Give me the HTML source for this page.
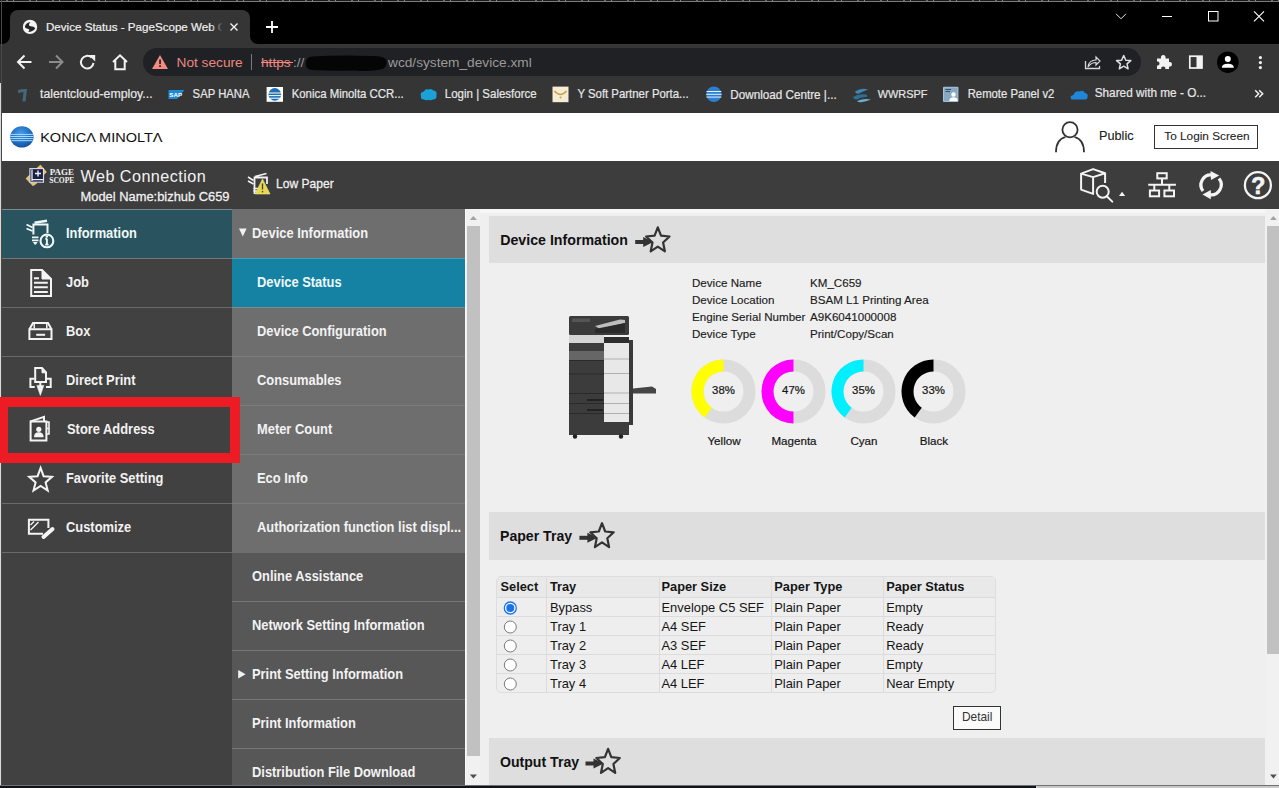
<!DOCTYPE html>
<html><head><meta charset="utf-8">
<style>
*{margin:0;padding:0;box-sizing:border-box}
html,body{width:1279px;height:788px;overflow:hidden;background:#000;font-family:"Liberation Sans",sans-serif;position:relative}
.a{position:absolute}
.t{position:absolute;white-space:nowrap;line-height:1}
svg{position:absolute;left:0;top:0;overflow:visible}
.bm{color:#e6e6e6;-webkit-text-stroke:0.2px #e6e6e6;transform:scaleY(1.08);transform-origin:0 84.65%}
.lt{color:#f2f2f2;font-weight:bold;font-size:12.9px;left:66px;transform:scaleY(1.09);transform-origin:0 84.65%}
.st{color:#f2f2f2;font-weight:bold;font-size:12.9px;left:257px;transform:scaleY(1.09);transform-origin:0 84.65%}
.st2{color:#f2f2f2;font-weight:bold;font-size:12.9px;left:252px;transform:scaleY(1.09);transform-origin:0 84.65%}
.ln{position:absolute;height:1px}
.dt{color:#1c1c1c;font-size:11.6px;-webkit-text-stroke:0.15px #1c1c1c}
.tb{color:#151515;font-size:12.9px}
.th{color:#151515;font-size:12.8px;font-weight:bold;top:581.1px}
.lbl{color:#151515;-webkit-text-stroke:0.2px #151515;font-size:11.6px;top:434.7px;width:70px;text-align:center}
.pct{color:#151515;-webkit-text-stroke:0.2px #151515;font-size:11.4px;top:385px;width:40px;text-align:center}
</style></head><body>

<!-- ================= WINDOW / CHROME ================= -->
<div class="a" style="left:0;top:0;width:1279px;height:1px;background:repeating-linear-gradient(90deg,#1a1a1a 0,#1a1a1a 6px,#6a6a6a 6px,#6a6a6a 8px,#1a1a1a 8px,#1a1a1a 13px,#8a8a8a 13px,#8a8a8a 14px,#1a1a1a 14px,#1a1a1a 23px)"></div>
<div class="a" style="left:0;top:1px;width:1279px;height:1px;background:#7a7a7a"></div>
<!-- tab -->
<div class="a" style="left:10px;top:10px;width:240px;height:34px;background:#353535;border-radius:8px 8px 0 0"></div>
<div class="a" style="left:250px;top:36px;width:8px;height:8px;background:#353535"></div>
<div class="a" style="left:250px;top:28px;width:16px;height:16px;background:#000;border-radius:50%"></div>
<div class="a" style="left:2px;top:36px;width:8px;height:8px;background:#353535"></div>
<div class="a" style="left:-6px;top:28px;width:16px;height:16px;background:#000;border-radius:50%"></div>
<!-- globe favicon -->
<svg width="1279" height="60">
  <circle cx="30" cy="26.9" r="7.2" fill="#f4f4f4"/>
  <path d="M24.9 26.8 Q25.2 23.4 30.4 22.1 Q28.4 24.2 29 25.4 Q30.2 26.2 32.6 26.4 Q34.6 26.9 35.2 28.2 Q34.2 30.8 31.8 31.2 Q30.2 32 28.2 32 Q29.5 30.6 29.3 29.7 Q28.8 28.8 26.8 28.5 Q25.2 28.2 24.9 26.8 Z" fill="#252525"/>
</svg>
<div class="t" style="left:46px;top:20.9px;color:#f0f0f0;font-size:11.6px;-webkit-text-stroke:0.2px #f0f0f0">Device Status - PageScope Web C</div>
<div class="a" style="left:211px;top:14px;width:14px;height:24px;background:linear-gradient(90deg,rgba(53,53,53,0),#353535 85%)"></div>
<div class="a" style="left:225px;top:14px;width:20px;height:24px;background:#353535"></div>
<svg width="1279" height="60">
  <path d="M230.5 23.5 L237.5 30.5 M237.5 23.5 L230.5 30.5" stroke="#f2f2f2" stroke-width="1.4"/>
  <path d="M272 21 V33 M266 27 H278" stroke="#fff" stroke-width="1.8"/>
  <!-- window controls -->
  <path d="M1116 13.8 L1121 18.8 L1126 13.8" stroke="#e8e8e8" stroke-width="1" fill="none"/>
  <path d="M1162 16.5 H1172" stroke="#fff" stroke-width="1"/>
  <rect x="1208.5" y="11.5" width="9.5" height="9.5" stroke="#fff" stroke-width="1" fill="none"/>
  <path d="M1254 11.3 L1264 21.3 M1264 11.3 L1254 21.3" stroke="#fff" stroke-width="1.1"/>
</svg>

<!-- toolbar -->
<div class="a" style="left:0;top:44px;width:1279px;height:69px;background:#353535"></div>
<div class="a" style="left:143px;top:48px;width:998px;height:28px;background:#202124;border-radius:14px"></div>
<svg width="1279" height="120">
  <!-- back -->
  <path d="M31.5 62 H18.5 M24.5 55.5 L18 62 L24.5 68.5" stroke="#f2f2f2" stroke-width="2" fill="none"/>
  <!-- forward -->
  <path d="M49 62 H62 M56 55.5 L62.5 62 L56 68.5" stroke="#8c8c8c" stroke-width="2" fill="none"/>
  <!-- reload -->
  <path d="M93.5 63 A6.3 6.3 0 1 1 91.5 57.5" stroke="#f2f2f2" stroke-width="2" fill="none"/>
  <path d="M88.5 55 H95.2 V61.5 Z" fill="#f2f2f2"/>
  <!-- home -->
  <path d="M113 62 L120 55.3 L127 62 M115.3 60 V69.3 H124.7 V60" stroke="#f2f2f2" stroke-width="2" fill="none" stroke-linejoin="miter"/>
  <!-- warning -->
  <path d="M160 55 L168 69 H152 Z" fill="#f28b82"/>
  <rect x="159.2" y="59.5" width="1.7" height="4.6" fill="#202020"/>
  <rect x="159.2" y="65.3" width="1.7" height="1.7" fill="#202020"/>
  <!-- share -->
  <path d="M1085.5 61 V68.5 H1099.5 V66" stroke="#d8d8d8" stroke-width="1.3" fill="none"/>
  <path d="M1088 67 Q1089 60 1096 60 V57 L1100 61 L1096 65 V62.5 Q1091 62.5 1088 67 Z" stroke="#d8d8d8" stroke-width="1.2" fill="none"/>
  <!-- star -->
  <path d="M1123.7 55.5 L1125.8 60.2 L1130.8 60.6 L1127 63.9 L1128.1 68.8 L1123.7 66.2 L1119.3 68.8 L1120.4 63.9 L1116.6 60.6 L1121.6 60.2 Z" stroke="#e0e0e0" stroke-width="1.5" fill="none" stroke-linejoin="round"/>
  <!-- puzzle -->
  <path d="M1157 58.5 H1161 Q1160.5 55 1163.3 55 Q1166 55 1165.5 58.5 H1169 V62 Q1172 61.5 1172 64.3 Q1172 67 1169 66.6 V69 H1165.3 Q1165.8 66.5 1163.3 66.5 Q1160.8 66.5 1161.2 69 H1157 V65.4 Q1159.5 65.8 1159.5 63.5 Q1159.5 61.2 1157 61.6 Z" fill="#f2f2f2"/>
  <!-- sidebar -->
  <rect x="1189.8" y="56.2" width="12.2" height="11.8" stroke="#f2f2f2" stroke-width="1.7" fill="none"/>
  <rect x="1196.5" y="56" width="5.5" height="12.3" fill="#f2f2f2"/>
  <!-- avatar -->
  <circle cx="1227.8" cy="62.2" r="10.8" fill="#000"/>
  <circle cx="1227.8" cy="59" r="3" fill="#fff"/>
  <path d="M1221.8 67.8 Q1221.8 63.8 1227.8 63.8 Q1233.8 63.8 1233.8 67.8 Z" fill="#fff"/>
  <!-- kebab -->
  <circle cx="1260.4" cy="57.6" r="1.6" fill="#f2f2f2"/>
  <circle cx="1260.4" cy="62.6" r="1.6" fill="#f2f2f2"/>
  <circle cx="1260.4" cy="67.6" r="1.6" fill="#f2f2f2"/>
</svg>
<div class="t" style="left:176.5px;top:56.2px;color:#ec8780;font-size:13.7px">Not secure</div>
<div class="a" style="left:251px;top:54px;width:1px;height:16px;background:#7a7a7a"></div>
<div class="t" style="left:261px;top:56.2px;color:#ec8780;font-size:13.7px">https</div>
<div class="a" style="left:261px;top:62px;width:32px;height:1.3px;background:#ec8780"></div>
<div class="t" style="left:293px;top:56.2px;color:#9a9a9a;font-size:13.7px">://</div>
<div class="t" style="left:388px;top:56.2px;color:#9a9a9a;font-size:13.7px">wcd/system_device.xml</div>
<svg width="1279" height="120"><path d="M312 56.5 Q340 55 370 56 Q384 55.5 386.5 60 Q387.5 66 383 69 Q370 72 355 70.5 Q330 71 312 70 Q305.5 69.5 305.8 63 Q306 57 312 56.5 Z" fill="#050505"/></svg>

<!-- bookmarks -->
<svg width="1279" height="120">
  <!-- talentcloud -->
  <path d="M18 90 Q22 88.5 27 89 L25.5 101.5 H22.5 L23.5 92 Q20 92.5 18 93 Z" fill="#44687a"/>
  <!-- SAP -->
  <path d="M168.5 90 H184.5 L177 99 H168.5 Z" fill="#1c8ad6"/>
  <text x="169.3" y="97" font-family="Liberation Sans" font-weight="bold" font-size="6.2" fill="#fff">SAP</text>
  <!-- KM globe -->
  <rect x="266.6" y="87" width="16.4" height="14.8" fill="#fff"/>
  <circle cx="274.8" cy="94.4" r="6.3" fill="#1e6fb3"/>
  <path d="M268.5 93 H281 M268.7 95.6 H280.9 M269.5 98.2 H280" stroke="#fff" stroke-width="1"/>
  <!-- salesforce -->
  <path d="M421 96.5 Q419.5 92 424 91.5 Q425 88.5 428.5 89.5 Q431 88 433.5 90.5 Q437.5 91 436.5 95 Q437 99.5 433 99.5 Q431 101 428.5 99.8 Q425.5 101 424 99.5 Q420.5 99.5 421 96.5 Z" fill="#1ba0d8"/>
  <!-- ysoft -->
  <rect x="552.5" y="86.6" width="16" height="15.6" fill="#f6ecd6"/>
  <path d="M554.5 91 Q560.5 98 566.5 91" stroke="#c9a041" stroke-width="1.4" fill="none"/>
  <circle cx="560.5" cy="97.5" r="1" fill="#c9a041"/>
  <!-- download globe -->
  <circle cx="713.9" cy="94.3" r="7.7" fill="#2a7fd0"/>
  <path d="M706.5 91.5 H721.3 M706.2 94.3 H721.6 M706.5 97.1 H721.3" stroke="#eaf4ff" stroke-width="1"/>
  <!-- wwrspf -->
  <path d="M855 91.5 Q861 87.5 868 89.5 Q864 91 859 93.5 Q856 94.5 855 91.5 Z" fill="#3f86b4"/>
  <path d="M853 97 Q858 93.5 866 94.5 Q868 95.5 866.5 97 Q861 96.5 857 99.5 Q854 100 853 97 Z" fill="#2e6f96"/>
  <path d="M857 101 Q864 98 871 99.5 Q866 101.5 861 102.3 Q858 102.5 857 101 Z" fill="#6ab0d8"/>
  <!-- remote panel -->
  <rect x="943" y="86.7" width="15.4" height="15.4" rx="1" fill="#a9c3d6"/>
  <rect x="944" y="87.7" width="13.4" height="13.4" fill="#87a9c2"/>
  <path d="M945.5 89.5 H951 M945.5 91.5 H950" stroke="#34506a" stroke-width="1"/>
  <circle cx="953.5" cy="94.5" r="2.2" fill="#fff"/>
  <path d="M949.3 101 Q949.3 97.3 953.5 97.3 Q957.7 97.3 957.7 101 Z" fill="#fff"/>
  <!-- onedrive -->
  <path d="M1071 99 Q1069.5 95.5 1073.5 95 Q1075 90.5 1079.5 91.5 Q1083 89.5 1085 93 Q1088.5 93.5 1087.5 97 Q1087.5 99.5 1085 99.5 H1073 Q1071.5 99.5 1071 99 Z" fill="#1f86d8"/>
  <!-- chevrons -->
  <path d="M1255.2 90.3 L1258.7 93.8 L1255.2 97.3 M1259.2 90.3 L1262.7 93.8 L1259.2 97.3" stroke="#f2f2f2" stroke-width="1.5" fill="none"/>
</svg>
<div class="t bm" style="font-size:12.3px;top:88.0px;left:40px">talentcloud-employ...</div>
<div class="t bm" style="font-size:11.3px;top:88.8px;left:192.6px">SAP HANA</div>
<div class="t bm" style="font-size:11.4px;top:88.7px;left:291.7px">Konica Minolta CCR...</div>
<div class="t bm" style="font-size:11.5px;top:88.7px;left:444.8px">Login | Salesforce</div>
<div class="t bm" style="font-size:11.4px;top:88.7px;left:577.4px">Y Soft Partner Porta...</div>
<div class="t bm" style="font-size:11.7px;top:88.5px;left:730.3px">Download Centre |...</div>
<div class="t bm" style="font-size:10.9px;top:89.2px;left:877.8px">WWRSPF</div>
<div class="t bm" style="font-size:11.3px;top:88.8px;left:967.7px">Remote Panel v2</div>
<div class="t bm" style="font-size:11.8px;top:88.4px;left:1094.7px">Shared with me - O...</div>

<!-- left outer column (background window) -->
<div class="a" style="left:0;top:83px;width:1px;height:705px;background:#d8d8d8"></div>
<div class="a" style="left:1px;top:0;width:1px;height:788px;background:#4a4a4a"></div>

<!-- ================= PAGE ================= -->
<div class="a" style="left:2px;top:113px;width:1277px;height:48px;background:#fff"></div>
<svg width="1279" height="220">
  <defs>
    <radialGradient id="kmg" cx="0.45" cy="0.35" r="0.7">
      <stop offset="0" stop-color="#4a9ae8"/><stop offset="0.6" stop-color="#1f6dc2"/><stop offset="1" stop-color="#144f9a"/>
    </radialGradient>
  </defs>
  <ellipse cx="21.9" cy="136.9" rx="11.7" ry="10.6" fill="url(#kmg)"/>
  <path d="M10.6 134.4 H33.2 M10.3 136.5 H33.5 M10.5 138.6 H33.3 M11.3 140.7 H32.5" stroke="#a8dcff" stroke-width="1"/>
  <!-- person -->
  <circle cx="1070" cy="129.8" r="7.6" stroke="#333" stroke-width="1.8" fill="none"/>
  <path d="M1056 152.2 Q1056 139.5 1065.5 137 M1084 152.2 Q1084 139.5 1074.5 137" stroke="#333" stroke-width="1.8" fill="none"/>
</svg>
<svg width="1279" height="220"><text x="40.2" y="141.7" font-family="Liberation Sans" font-size="12.6" fill="#111" stroke="#111" stroke-width="0.05" textLength="122.3" lengthAdjust="spacingAndGlyphs">KONICΛ MINOLTΛ</text></svg>
<div class="t" style="left:1099px;top:129.8px;font-size:12.7px;color:#222;-webkit-text-stroke:0.15px #222">Public</div>
<div class="a" style="left:1154px;top:125px;width:104px;height:24px;border:1px solid #333;background:#fff"></div>
<div class="t" style="left:1164.3px;top:131.2px;font-size:11.8px;color:#222;-webkit-text-stroke:0.1px #222">To Login Screen</div>

<!-- dark bar -->
<div class="a" style="left:2px;top:161px;width:1277px;height:48px;background:#3d3d3d"></div>
<svg width="1279" height="220">
  <!-- pagescope logo -->
  <path d="M25.7 178.6 L40.4 164.8 L46.7 172 L33 185.9 Z" fill="#d2a450"/>
  <path d="M36 169 L40.4 164.8 L46.7 172 L43 175.6 Z" fill="#e9bd72"/>
  <path d="M25.7 178.6 L29.5 175 L37 183.5 L33 185.9 Z" fill="#e3c078"/>
  <rect x="29.9" y="168.6" width="13.6" height="13.6" fill="#1b2140" stroke="#dcdcf0" stroke-width="1.1"/>
  <path d="M32 169.5 V181 M31.5 179.7 H43" stroke="#f0f0f8" stroke-width="1.3"/>
  <path d="M35 173.5 H41 M38 170.5 V176.5" stroke="#f0f0f8" stroke-width="1.4"/>
  <text x="49.8" y="174.9" font-family="Liberation Serif" font-weight="bold" font-size="8.9" fill="#f2f2f2" textLength="24.1" lengthAdjust="spacingAndGlyphs">PAGE</text>
  <text x="49.2" y="182.6" font-family="Liberation Serif" font-weight="bold" font-size="8.9" fill="#f2f2f2" textLength="25.1" lengthAdjust="spacingAndGlyphs">SCOPE</text>
  <!-- low paper icon -->
  <path d="M248 177 L253.5 180.5 M248 181 L253.5 184" stroke="#f2f2f2" stroke-width="1.6"/>
  <path d="M254.5 194 V177.5 H267 V184 M255 176.5 L266.5 173.5" stroke="#f2f2f2" stroke-width="1.8" fill="none"/>
  <path d="M253.5 188.5 H258 M253.5 191 H257" stroke="#f2f2f2" stroke-width="1.3"/>
  <path d="M262.5 179 L270 194 H255 Z" fill="#e8d84a" stroke="#f0e8a0" stroke-width="0.6"/>
  <path d="M262.5 183.5 V189.5" stroke="#3d3d3d" stroke-width="1.3"/>
  <rect x="261.8" y="191" width="1.4" height="1.4" fill="#3d3d3d"/>
  <!-- cube search -->
  <path d="M1081.1 173.6 L1093.1 169.1 L1105.1 173.3 L1093.1 177.1 Z M1081.1 173.6 V189.6 L1093.1 193.9 V177.1 M1105.1 173.3 V183" stroke="#f4f4f4" stroke-width="2" fill="none" stroke-linejoin="round"/>
  <circle cx="1102.7" cy="191.7" r="6" stroke="#f4f4f4" stroke-width="2" fill="#3d3d3d"/>
  <path d="M1106.8 196.2 L1112.3 201.6" stroke="#f4f4f4" stroke-width="2" stroke-linecap="round"/>
  <path d="M1119 196 L1122 191.7 L1125.2 196 Z" fill="#f4f4f4"/>
  <!-- network -->
  <rect x="1157.3" y="173.2" width="9.4" height="5.2" stroke="#f4f4f4" stroke-width="2" fill="none"/>
  <path d="M1162 178.5 V184.7 M1148.2 184.7 H1175.9 M1154.3 184.7 V190 M1169.3 184.7 V190" stroke="#f4f4f4" stroke-width="2" fill="none"/>
  <rect x="1149.9" y="190.5" width="9.2" height="5.8" stroke="#f4f4f4" stroke-width="2" fill="none"/>
  <rect x="1164.4" y="190.5" width="9.6" height="5.8" stroke="#f4f4f4" stroke-width="2" fill="none"/>
  <!-- refresh -->
  <path d="M1203 191 A10 10 0 0 1 1212 175" stroke="#f4f4f4" stroke-width="3.2" fill="none"/>
  <path d="M1210.5 171 L1219.2 175.5 L1211 180 Z" fill="#f4f4f4"/>
  <path d="M1219 178.5 A10 10 0 0 1 1209.5 194.6" stroke="#f4f4f4" stroke-width="3.2" fill="none"/>
  <path d="M1210.8 190 L1202.5 194.5 L1210.8 199.2 Z" fill="#f4f4f4"/>
  <!-- help -->
  <circle cx="1257.9" cy="185.2" r="13" stroke="#f4f4f4" stroke-width="2.3" fill="none"/>
</svg>
<svg width="1279" height="220"><text x="1251.3" y="193.9" font-family="Liberation Sans" font-weight="bold" font-size="23" fill="#f4f4f4" stroke="#f4f4f4" stroke-width="0.7">?</text></svg>
<div class="t" style="left:80.5px;top:167.8px;font-size:16.2px;letter-spacing:0.45px;color:#f2f2f2">Web Connection</div>
<div class="t" style="left:80.5px;top:191.1px;font-size:12.9px;color:#f2f2f2;transform:scaleY(1.06);transform-origin:0 84.65%;-webkit-text-stroke:0.25px #f2f2f2">Model Name:bizhub C659</div>
<div class="t" style="left:276px;top:177.8px;font-size:12.07px;color:#f2f2f2;transform:scaleY(1.06);transform-origin:0 84.65%;-webkit-text-stroke:0.25px #f2f2f2">Low Paper</div>

<!-- ============ LEFT MENU ============ -->
<div class="a" style="left:2px;top:209px;width:230px;height:577px;background:#414141"></div>
<div class="a" style="left:2px;top:210px;width:230px;height:48px;background:#29535f"></div>
<div class="ln" style="left:2px;top:209px;width:230px;background:#7b8a8f"></div>
<div class="ln" style="left:2px;top:258px;width:230px;background:#767676"></div>
<div class="ln" style="left:2px;top:307px;width:230px;background:#6a6a6a"></div>
<div class="ln" style="left:2px;top:356px;width:230px;background:#6a6a6a"></div>
<div class="ln" style="left:2px;top:405px;width:230px;background:#6a6a6a"></div>
<div class="ln" style="left:2px;top:454px;width:230px;background:#6a6a6a"></div>
<div class="ln" style="left:2px;top:503px;width:230px;background:#6a6a6a"></div>
<div class="ln" style="left:2px;top:552px;width:230px;background:#6a6a6a"></div>
<div class="t lt" style="top:228.0px;color:#eef8f8">Information</div>
<div class="t lt" style="top:277.0px">Job</div>
<div class="t lt" style="top:326.0px">Box</div>
<div class="t lt" style="top:375.0px">Direct Print</div>
<div class="t lt" style="top:424.0px;left:67px">Store Address</div>
<div class="t lt" style="top:473.0px">Favorite Setting</div>
<div class="t lt" style="top:522.0px">Customize</div>
<svg width="1279" height="788">
  <g stroke="#eef8f8" fill="none" stroke-width="2">
    <!-- information -->
    <path d="M34.5 222.8 L47 220.8" stroke-width="2.6"/>
    <path d="M33.4 234.5 V224.5 H47.5 V233"/>
    <path d="M26.5 224.5 L32.5 227.5 M26.5 228.5 L32.5 231" stroke-width="1.8"/>
    <path d="M32 237.4 H38.5 M32 240.4 H38.5" stroke-width="1.6"/>
    <path d="M33.5 242.5 H37 L35.2 244.5 Z" stroke-width="1" fill="#eef8f8"/>
    <circle cx="46.9" cy="240.9" r="6.4" stroke-width="2.1"/>
  </g>
  <path d="M46.9 238.8 V244.5 M45.2 244.6 H48.6 M45.3 238.8 H47" stroke="#eef8f8" stroke-width="1.9"/>
  <circle cx="46.9" cy="236.5" r="1.2" fill="#eef8f8"/>
  <g stroke="#f4f4f4" fill="none" stroke-width="2">
    <!-- job -->
    <path d="M31.2 270.1 H42 L51 279 V296 H31.2 Z"/>
    <path d="M42 270.5 V279 H50.5 Z" fill="#f4f4f4" stroke-width="1"/>
    <path d="M34 278.2 H39 M34 282.7 H47.8 M34 287.2 H47.8 M34 291.9 H47.8"/>
    <!-- box -->
    <path d="M29.4 329.3 L33 323 H48 L51.5 329.3 M29.4 329.3 H51.5 V339 H29.4 Z"/>
    <path d="M34.2 324 V328.5 M46.8 324 V328.5" stroke-width="1.5"/>
    <path d="M36.2 334.8 H45.1"/>
    <!-- direct print -->
    <path d="M35.2 382 V368.1 H42 L46 372.5 V382 Z"/>
    <path d="M42 368.5 V372.8 H45.8 Z" fill="#f4f4f4" stroke-width="1"/>
    <path d="M34.5 378.8 H30.4 V387 H34.7 M45.5 378.8 H50.7 V387 H46"/>
    <path d="M40.3 381 V386"/>
    <path d="M36.8 385.4 H43.9 L40.35 395.5 Z" fill="#f4f4f4" stroke-width="0.5"/>
    <!-- store address -->
    <path d="M30.6 421.4 V440.5 H46.4 V421.4 Z"/>
    <path d="M30.6 421.4 L44 416.8 V421"/>
    <path d="M47 422 H49 V428 M47 428.5 H49 V434 H47" stroke-width="1.6"/>
    <!-- favorite star -->
    <path d="M40.6 467.9 L43.6 476.2 L52 476.8 L45.6 482.4 L47.7 490.5 L40.6 486 L33.5 490.5 L35.6 482.4 L29.2 476.8 L37.6 476.2 Z" stroke-linejoin="miter"/>
    <!-- customize -->
    <path d="M43 533.7 H28.9 V519.7 H48.4 V528"/>
    <path d="M30.5 525 L34 521.5 M30.5 530 L38.5 522" stroke-width="1.4"/>
    <path d="M43.5 537 L52.5 529" stroke-width="4" stroke-linecap="round"/>
  </g>
  <circle cx="38.8" cy="429.3" r="2.6" fill="#f4f4f4"/>
  <path d="M34 437.3 Q34 432.3 38.8 432.3 Q43.6 432.3 43.6 437.3 Z" fill="#f4f4f4"/>
</svg>

<!-- ============ SUB MENU ============ -->
<div class="a" style="left:232px;top:209px;width:233px;height:577px;background:#575757"></div>
<div class="a" style="left:232px;top:209px;width:233px;height:343px;background:#6e6e6e"></div>
<div class="a" style="left:232px;top:259px;width:233px;height:48px;background:#1582a3"></div>
<div class="ln" style="left:232px;top:258px;width:233px;background:#4b9db8"></div>
<div class="ln" style="left:232px;top:307px;width:233px;background:#7f8a8e"></div>
<div class="ln" style="left:232px;top:356px;width:233px;background:#7c7c7c"></div>
<div class="ln" style="left:232px;top:405px;width:233px;background:#7c7c7c"></div>
<div class="ln" style="left:232px;top:454px;width:233px;background:#7c7c7c"></div>
<div class="ln" style="left:232px;top:503px;width:233px;background:#7c7c7c"></div>
<div class="ln" style="left:232px;top:552px;width:233px;background:#6f6f6f"></div>
<div class="ln" style="left:232px;top:601px;width:233px;background:#777"></div>
<div class="ln" style="left:232px;top:650px;width:233px;background:#777"></div>
<div class="ln" style="left:232px;top:699px;width:233px;background:#777"></div>
<div class="ln" style="left:232px;top:748px;width:233px;background:#777"></div>
<svg width="1279" height="788">
  <path d="M239 228.5 H246.6 L242.8 236.5 Z" fill="#f2f2f2"/>
  <path d="M238.2 670 V678.4 L245.6 674.2 Z" fill="#f2f2f2"/>
</svg>
<div class="t st2" style="top:228.0px">Device Information</div>
<div class="t st" style="top:277.0px;color:#eef8fa">Device Status</div>
<div class="t st" style="top:326.0px">Device Configuration</div>
<div class="t st" style="top:375.0px">Consumables</div>
<div class="t st" style="top:424.0px">Meter Count</div>
<div class="t st" style="top:473.0px">Eco Info</div>
<div class="t st" style="top:522.0px">Authorization function list displ...</div>
<div class="t st2" style="top:571.0px">Online Assistance</div>
<div class="t st2" style="top:620.0px">Network Setting Information</div>
<div class="t st2" style="top:669.0px">Print Setting Information</div>
<div class="t st2" style="top:718.0px">Print Information</div>
<div class="t st2" style="top:767.0px">Distribution File Download</div>

<!-- submenu scrollbar -->
<div class="a" style="left:465px;top:209px;width:15px;height:577px;background:#f1f1f1"></div>
<div class="a" style="left:465px;top:209px;width:1px;height:577px;background:#fafafa"></div>
<div class="a" style="left:467px;top:226px;width:12.5px;height:530px;background:#c1c1c1"></div>
<svg width="1279" height="788">
  <path d="M469.8 220 L473.4 216 L477 220 Z" fill="#a3a3a3"/>
  <path d="M469.8 774.5 L473.4 778.5 L477 774.5 Z" fill="#505050"/>
</svg>

<!-- ============ MAIN ============ -->
<div class="a" style="left:480px;top:209px;width:785px;height:577px;background:#efefef"></div>
<div class="a" style="left:480px;top:209px;width:785px;height:4px;background:#f6f6f6"></div>
<div class="a" style="left:489px;top:216px;width:776px;height:47px;background:#dedede"></div>
<div class="a" style="left:489px;top:512px;width:776px;height:47.5px;background:#dedede"></div>
<div class="a" style="left:489px;top:737.5px;width:776px;height:49px;background:#dedede"></div>
<div class="t" style="left:500.2px;top:233px;font-size:14.2px;font-weight:bold;color:#111">Device Information</div>
<div class="t" style="left:500px;top:528.9px;font-size:14.1px;font-weight:bold;color:#111">Paper Tray</div>
<div class="t" style="left:500px;top:754.9px;font-size:14.1px;font-weight:bold;color:#111">Output Tray</div>
<svg width="1279" height="788">
  <defs>
    <g id="sa">
      <rect x="0" y="-5" width="9.5" height="4" fill="#333"/>
      <path d="M8 -8 L18.2 -3 L8 2 Z" fill="#333"/>
      <path d="M22.6 -17.6 L25.8 -9.3 L34.3 -8.5 L27.9 -2.5 L29.7 6.3 L22.6 1.6 L15.5 6.3 L17.3 -2.5 L10.9 -8.5 L19.4 -9.3Z" stroke="#333" stroke-width="2.2" fill="none" stroke-linejoin="round"/>
    </g>
  </defs>
  <use href="#sa" x="635.2" y="245"/>
  <use href="#sa" x="579.4" y="540.8"/>
  <use href="#sa" x="585.5" y="766.5"/>
</svg>

<!-- device info -->
<div class="t dt" style="left:692px;top:277.1px">Device Name</div>
<div class="t dt" style="left:692px;top:293.7px">Device Location</div>
<div class="t dt" style="left:692px;top:311px">Engine Serial Number</div>
<div class="t dt" style="left:692px;top:328.2px">Device Type</div>
<div class="t dt" style="left:810px;top:277.1px">KM_C659</div>
<div class="t dt" style="left:810px;top:293.7px">BSAM L1 Printing Area</div>
<div class="t dt" style="left:810px;top:311px">A9K6041000008</div>
<div class="t dt" style="left:810px;top:328.2px">Print/Copy/Scan</div>

<!-- printer -->
<svg width="1279" height="788">
  <rect x="569" y="316" width="60" height="19" rx="1.5" fill="#3b3b3b"/>
  <path d="M572 318.5 H590 V322 H572 Z" fill="#555"/>
  <path d="M595 326 L620 319.5 L625 320 L625 323 L600 329 Z" fill="#bdbdbd"/>
  <path d="M595 329 L625 323 V333 H595 Z" fill="#2a2a2a"/>
  <rect x="569" y="335" width="35" height="8" fill="#d5d5d5"/>
  <rect x="569" y="343" width="35" height="92" fill="#3c3c3c"/>
  <rect x="569" y="351" width="35" height="9" fill="#666"/>
  <path d="M569 360.5 H604 M569 374 H604 M569 393.5 H604 M569 403.5 H604 M569 413.5 H604" stroke="#2a2a2a" stroke-width="1"/>
  <rect x="587" y="399" width="16" height="2" fill="#222"/>
  <rect x="587" y="409" width="16" height="2" fill="#222"/>
  <rect x="604" y="337" width="25" height="6" fill="#2e2e2e"/>
  <rect x="604" y="343" width="25" height="79" fill="#e8e8e8"/>
  <path d="M604 359 H629 M604 373.5 H629 M604 393 H629 M604 403.5 H629 M604 413.5 H629" stroke="#b0b0b0" stroke-width="1"/>
  <rect x="604" y="422" width="25" height="13" fill="#3c3c3c"/>
  <rect x="629" y="340" width="4" height="85" fill="#3a3a3a"/>
  <path d="M633 388.5 L652 386.5 L656 389 V393.5 H633 Z" fill="#454545"/>
  <circle cx="575" cy="436.5" r="2.2" fill="#222"/>
  <circle cx="621" cy="436.5" r="2.2" fill="#222"/>
</svg>

<!-- donuts -->
<svg width="1279" height="788">
  <g fill="none" stroke="#dcdcdc" stroke-width="12">
    <circle cx="723.5" cy="391.5" r="26"/>
    <circle cx="793.5" cy="391.5" r="26"/>
    <circle cx="863.5" cy="391.5" r="26"/>
    <circle cx="933.5" cy="391.5" r="26"/>
  </g>
  <path d="M723.5 359.5 A32 32 0 0 0 704.69 417.39 L711.74 407.68 A20 20 0 0 1 723.5 371.5 Z" fill="#ffff00"/>
  <path d="M793.5 359.5 A32 32 0 0 0 793.50 423.50 L793.50 411.50 A20 20 0 0 1 793.5 371.5 Z" fill="#ff00ff"/>
  <path d="M863.5 359.5 A32 32 0 0 0 844.69 417.39 L851.74 407.68 A20 20 0 0 1 863.5 371.5 Z" fill="#00f0ff"/>
  <path d="M933.5 359.5 A32 32 0 0 0 914.69 417.39 L921.74 407.68 A20 20 0 0 1 933.5 371.5 Z" fill="#000"/>
</svg>
<div class="t pct" style="left:703.5px">38%</div>
<div class="t pct" style="left:773.5px">47%</div>
<div class="t pct" style="left:843.5px">35%</div>
<div class="t pct" style="left:913.5px">33%</div>
<div class="t lbl" style="left:689px">Yellow</div>
<div class="t lbl" style="left:759px">Magenta</div>
<div class="t lbl" style="left:829px">Cyan</div>
<div class="t lbl" style="left:899px">Black</div>

<!-- paper tray table -->
<div class="a" style="left:496px;top:576px;width:500px;height:117px;border:1px solid #dddddd;border-radius:5px;background:#eeeeee;overflow:hidden">
  <div class="a" style="left:0;top:0;width:498px;height:21px;background:#e9e9e9"></div>
</div>
<div class="ln" style="left:497px;top:597px;width:498px;background:#dcdcdc"></div>
<div class="ln" style="left:497px;top:616px;width:498px;background:#dcdcdc"></div>
<div class="ln" style="left:497px;top:635px;width:498px;background:#dcdcdc"></div>
<div class="ln" style="left:497px;top:654px;width:498px;background:#dcdcdc"></div>
<div class="ln" style="left:497px;top:673px;width:498px;background:#dcdcdc"></div>
<div class="a" style="left:546px;top:577px;width:1px;height:115px;background:#dcdcdc"></div>
<div class="a" style="left:659px;top:577px;width:1px;height:115px;background:#dcdcdc"></div>
<div class="a" style="left:771px;top:577px;width:1px;height:115px;background:#dcdcdc"></div>
<div class="a" style="left:883px;top:577px;width:1px;height:115px;background:#dcdcdc"></div>
<div class="t th" style="left:500.5px">Select</div>
<div class="t th" style="left:549.9px">Tray</div>
<div class="t th" style="left:661.5px">Paper Size</div>
<div class="t th" style="left:774.3px">Paper Type</div>
<div class="t th" style="left:886.2px">Paper Status</div>
<svg width="1279" height="788">
  <circle cx="510.3" cy="608" r="6" fill="#fff" stroke="#1a73e8" stroke-width="1.3"/>
  <circle cx="510.3" cy="608" r="4" fill="#1a73e8"/>
  <g fill="#fff" stroke="#7a7a7a" stroke-width="1">
    <circle cx="510.3" cy="627" r="6"/>
    <circle cx="510.3" cy="646" r="6"/>
    <circle cx="510.3" cy="665" r="6"/>
    <circle cx="510.3" cy="684" r="6"/>
  </g>
</svg>
<div class="t tb" style="left:550px;top:602.1px">Bypass</div>
<div class="t tb" style="left:550px;top:621px">Tray 1</div>
<div class="t tb" style="left:550px;top:639.8px">Tray 2</div>
<div class="t tb" style="left:550px;top:658.9px">Tray 3</div>
<div class="t tb" style="left:550px;top:677.8px">Tray 4</div>
<div class="t tb" style="left:661.5px;top:602.1px">Envelope C5 SEF</div>
<div class="t tb" style="left:661.5px;top:621px">A4 SEF</div>
<div class="t tb" style="left:661.5px;top:639.8px">A3 SEF</div>
<div class="t tb" style="left:661.5px;top:658.9px">A4 LEF</div>
<div class="t tb" style="left:661.5px;top:677.8px">A4 LEF</div>
<div class="t tb" style="left:774.2px;top:602.1px">Plain Paper</div>
<div class="t tb" style="left:774.2px;top:621px">Plain Paper</div>
<div class="t tb" style="left:774.2px;top:639.8px">Plain Paper</div>
<div class="t tb" style="left:774.2px;top:658.9px">Plain Paper</div>
<div class="t tb" style="left:774.2px;top:677.8px">Plain Paper</div>
<div class="t tb" style="left:886.2px;top:602.1px">Empty</div>
<div class="t tb" style="left:886.2px;top:621px">Ready</div>
<div class="t tb" style="left:886.2px;top:639.8px">Ready</div>
<div class="t tb" style="left:886.2px;top:658.9px">Empty</div>
<div class="t tb" style="left:886.2px;top:677.8px">Near Empty</div>
<div class="a" style="left:953px;top:706px;width:48px;height:24px;border:1px solid #333;background:#fafafa"></div>
<div class="t" style="left:962px;top:711.8px;font-size:11.9px;color:#333">Detail</div>

<!-- main scrollbar -->
<div class="a" style="left:1265px;top:209px;width:14px;height:577px;background:#f1f1f1"></div>
<div class="a" style="left:1267px;top:226px;width:12px;height:428px;background:#c1c1c1"></div>
<svg width="1279" height="788">
  <path d="M1270 220 L1273.4 216 L1276.8 220 Z" fill="#a3a3a3"/>
  <path d="M1270 774.5 L1273.4 778.5 L1276.8 774.5 Z" fill="#505050"/>
</svg>

<!-- red highlight -->
<div class="a" style="left:0;top:397px;width:240px;height:65.5px;border:10px solid #ed1c24;border-left-width:8px"></div>
<!-- bottom window edge -->
<div class="a" style="left:0;top:785px;width:1279px;height:1px;background:#707070"></div>
<div class="a" style="left:0;top:786px;width:1036px;height:2px;background:#10141a"></div>
<div class="a" style="left:1036px;top:786px;width:243px;height:2px;background:#c8c8c8"></div>
</body></html>
